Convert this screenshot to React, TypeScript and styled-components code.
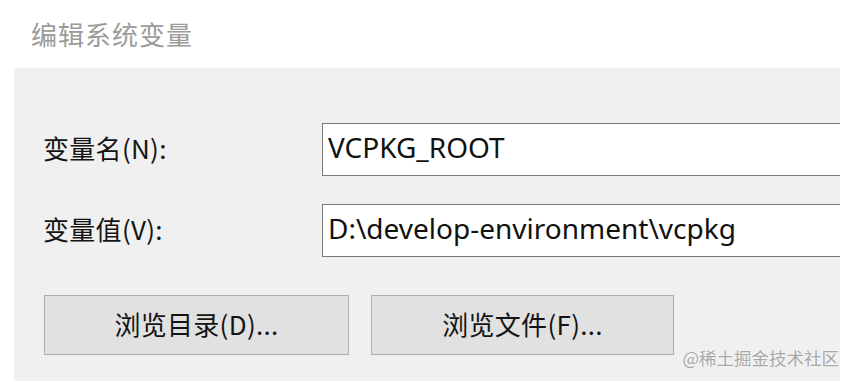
import React, { FunctionComponent } from 'react';
import styled, { createGlobalStyle } from 'styled-components';

const GlobalStyle = createGlobalStyle`
  html, body {
    margin: 0;
    padding: 0;
    background: #ffffff;
  }
  body {
    font-family: "Noto Sans", "Noto Sans CJK SC", sans-serif;
  }
`;

const Page = styled.div`
  position: relative;
  width: 855px;
  height: 384px;
  overflow: hidden;
  background: #ffffff;
`;

const Title = styled.div`
  height: 68px;
  padding-left: 31px;
  box-sizing: border-box;
  display: flex;
  align-items: center;
  padding-bottom: 2px;
  font-family: "Noto Sans CJK SC", sans-serif;
  font-size: 26px;
  color: #9b9b9b;
  letter-spacing: 1px;
`;

const Panel = styled.div`
  margin-left: 14px;
  width: 826px;
  height: 313px;
  box-sizing: border-box;
  background: #f0f0f0;
  overflow: hidden;
  padding: 55px 0 0 29px;
`;

const FieldGrid = styled.div`
  display: grid;
  grid-template-columns: 279px 560px;
  row-gap: 28px;
  align-items: center;
`;

const Label = styled.div`
  font-family: "Noto Sans CJK SC", sans-serif;
  font-size: 26px;
  color: #141414;
  padding-bottom: 4px;
  letter-spacing: 0.3px;
`;

const Field = styled.div`
  height: 53px;
  box-sizing: border-box;
  background: #ffffff;
  border: 1px solid #7a7a7a;
  border-right: none;
  padding: 0 0 5px 5px;
  display: flex;
  align-items: center;
  font-family: "Noto Sans", sans-serif;
  font-size: 28px;
  color: #111111;
  white-space: nowrap;
`;

const ButtonRow = styled.div`
  display: flex;
  gap: 22px;
  margin-top: 38px;
  padding-left: 1px;
`;

const Button = styled.div<{ $width: number }>`
  width: ${(p) => p.$width}px;
  height: 60px;
  box-sizing: border-box;
  background: #e1e1e1;
  border: 1px solid #adadad;
  display: flex;
  align-items: center;
  justify-content: center;
  padding-bottom: 3px;
  font-family: "Noto Sans CJK SC", sans-serif;
  font-size: 26px;
  color: #141414;
  letter-spacing: 0.3px;
`;

const Watermark = styled.div`
  position: absolute;
  right: 16px;
  top: 345px;
  font-family: "Noto Sans CJK SC", sans-serif;
  font-size: 17.5px;
  color: #a8a8a8;
  text-shadow: 0 0 2px #ffffff;
`;

const fields = [
  { label: '变量名(N):', value: 'VCPKG_ROOT' },
  { label: '变量值(V):', value: 'D:\\develop-environment\\vcpkg' },
];

const App: FunctionComponent = () => {
  return (
    <Page>
      <GlobalStyle />
      <Title>编辑系统变量</Title>
      <Panel>
        <FieldGrid>
          {fields.map((f) => (
            <React.Fragment key={f.label}>
              <Label>{f.label}</Label>
              <Field>{f.value}</Field>
            </React.Fragment>
          ))}
        </FieldGrid>
        <ButtonRow>
          <Button $width={305}>浏览目录(D)...</Button>
          <Button $width={303}>浏览文件(F)...</Button>
        </ButtonRow>
      </Panel>
      <Watermark>@稀土掘金技术社区</Watermark>
    </Page>
  );
};

export default App;
